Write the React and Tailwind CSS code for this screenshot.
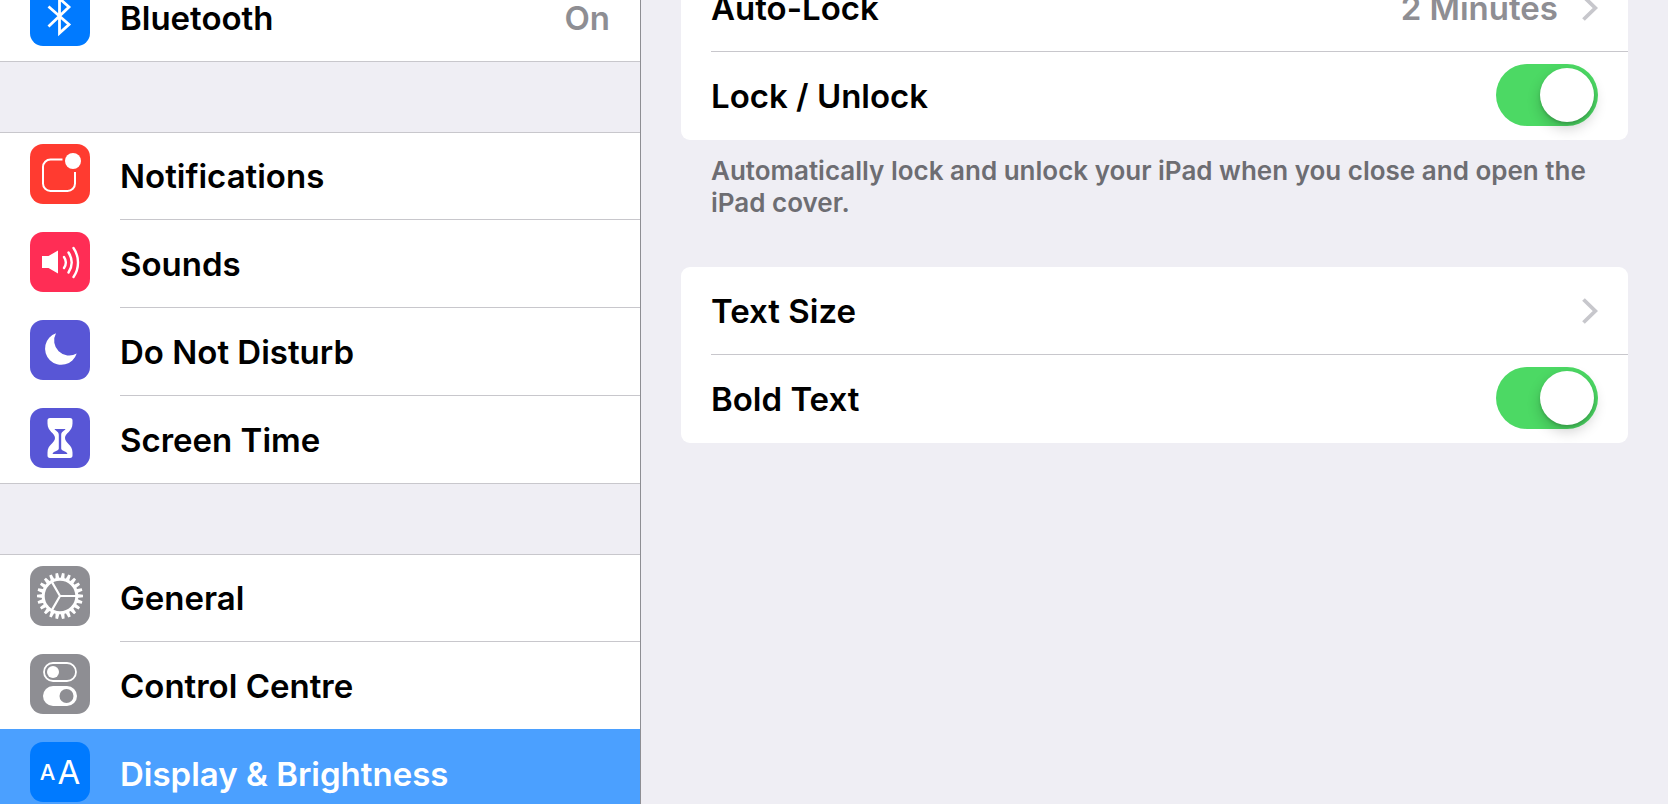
import React, { useState } from "react";

const BluetoothIcon = () => (
    <svg viewBox="0 0 60 60" className="size-[60px]" fill="none" stroke="#fff" strokeWidth="2.8">
        <path d="M18.5 20.5 39 38.5 29.5 47V12.5l9.5 8.5L18.5 40.5" />
    </svg>
);

const NotificationsIcon = () => (
    <svg viewBox="0 0 60 60" className="size-[60px]" fill="none">
        <path
            d="M32.5 15.5H20.5a7.5 7.5 0 0 0-7.5 7.5V39.5a7.5 7.5 0 0 0 7.5 7.5H37.5a7.5 7.5 0 0 0 7.5-7.5V28"
            stroke="#fff"
            strokeWidth="2"
        />
        <circle cx="43" cy="17" r="8" fill="#fff" />
    </svg>
);

const SoundsIcon = () => (
    <svg viewBox="0 0 60 60" className="size-[60px]" fill="none" stroke="#fff" strokeWidth="2.4" strokeLinecap="round">
        <path d="M12 24h6.5L28 18.5v23L18.5 36H12z" fill="#fff" stroke="none" />
        <path d="M34 25c2.3 3.4 2.3 7.6 0 11M38.500 20.5c4 6.2 4 13.8 0 20M43.5 16c6 8.5 6 20.5 0 29" />
    </svg>
);

const MoonIcon = () => (
    <svg viewBox="0 0 60 60" className="size-[60px]">
        <path d="M26 13.3a16.2 16.2 0 1 0 20.7 20.2A15 15 0 0 1 26 13.3z" fill="#fff" />
    </svg>
);

const HourglassIcon = () => (
    <svg viewBox="0 0 60 60" className="size-[60px]">
        <path
            d="M20 10h20c1.8 0 2.5 1 2.5 2.5v3c0 8-7.5 9.5-7.5 14.5s7.5 6.5 7.5 14.5v3c0 1.5-.7 2.5-2.5 2.5H20c-1.8 0-2.5-1-2.5-2.5v-3c0-8 7.5-9.5 7.5-14.5s-7.5-6.500-7.5-14.5v-3C17.5 11 18.2 10 20 10z"
            fill="#fff"
        />
        <path
            d="M24.5 21h11c-1 2-4.3 2.5-4.3 6v13.5c0 2.5 5 2 6.3 5.5h-15c1.3-3.5 6.3-3 6.3-5.5V27c0-3.5-3.3-4-4.3-6z"
            fill="#5856d6"
        />
    </svg>
);

const teeth = Array.from({ length: 22 }, (_, i) => (i * 360) / 22);

const GearIcon = () => (
    <svg viewBox="0 0 60 60" className="size-[60px]" fill="none" stroke="#fff">
        <circle cx="30" cy="30" r="16.8" strokeWidth="3" />
        {teeth.map((angle) => (
            <path key={angle} d="M47 28l6 .7v2.6l-6 .7z" fill="#fff" stroke="none" transform={`rotate(${angle} 30 30)`} />
        ))}
        <path d="M30 30h16M30 30l-8-13.9M30 30l-8 13.9" strokeWidth="2.2" />
    </svg>
);

const ControlCentreIcon = () => (
    <svg viewBox="0 0 60 60" className="size-[60px]">
        <rect x="14" y="9" width="32" height="18" rx="9" fill="none" stroke="#fff" strokeWidth="1.8" />
        <circle cx="23" cy="18" r="6" fill="#fff" />
        <rect x="13" y="32" width="34" height="20" rx="10" fill="#fff" />
        <circle cx="36.5" cy="42" r="7" fill="#8e8e93" />
    </svg>
);

const DisplayIcon = () => (
    <span className="flex h-[60px] items-center justify-center gap-0.5 font-normal text-white" aria-hidden="true">
        <span className="text-[22px] font-medium">A</span>
        <span className="text-[33px]">A</span>
    </span>
);

const groups = [
    [{ name: "Bluetooth", Icon: BluetoothIcon, color: "bg-[#007aff]", value: "On" }],
    [
        { name: "Notifications", Icon: NotificationsIcon, color: "bg-[#ff3b30]" },
        { name: "Sounds", Icon: SoundsIcon, color: "bg-[#ff2d55]" },
        { name: "Do Not Disturb", Icon: MoonIcon, color: "bg-[#5856d6]" },
        { name: "Screen Time", Icon: HourglassIcon, color: "bg-[#5856d6]" },
    ],
    [
        { name: "General", Icon: GearIcon, color: "bg-[#8e8e93]" },
        { name: "Control Centre", Icon: ControlCentreIcon, color: "bg-[#8e8e93]" },
        { name: "Display & Brightness", Icon: DisplayIcon, color: "bg-[#007aff]" },
    ],
];

const SidebarGroup = ({ items, selected, onSelect }) => (
    <ul className="bg-white border-t border-[#c8c7cc]">
        {items.map(({ name, Icon, color, value }, i) => {
            const active = name === selected;
            const last = i === items.length - 1;
            const beforeActive = !last && items[i + 1].name === selected;
            return (
                <li key={name} className={i === 0 ? "-mt-px" : ""}>
                    <button
                        onClick={() => onSelect(name)}
                        className={`flex h-[88px] w-full gap-[30px] pl-[30px] text-left ${
                            active ? "bg-[#4ba0ff] text-white" : ""
                        } ${last || beforeActive ? "border-b" : ""} ${
                            beforeActive ? "border-[#4ba0ff]" : "border-[#c8c7cc]"
                        }`}
                    >
                        <span className={`mt-3 size-[60px] shrink-0 overflow-hidden rounded-[13px] ${color}`}>
                            <Icon />
                        </span>
                        <span
                            className={`flex h-[88px] flex-1 items-center justify-between pr-[30px] ${
                                last || beforeActive ? "" : "border-b border-[#c8c7cc]"
                            }`}
                        >
                            {name}
                            {value && <span className="text-[#8e8e93]">{value}</span>}
                        </span>
                    </button>
                </li>
            );
        })}
    </ul>
);

const Chevron = () => (
    <svg viewBox="0 0 16 26" className="h-[26px] w-4" fill="none" stroke="#c7c7cc" strokeWidth="3.8">
        <path d="M1.5 1.5 13.3 13 1.5 24.5" />
    </svg>
);

const LinkRow = ({ name, value }) => (
    <button className="flex w-full pl-[30px] text-left">
        <span className="flex h-[88px] flex-1 items-center border-b border-[#c8c7cc] pr-[30px]">
            <span className="flex-1">{name}</span>
            {value && <span className="mr-6 text-[#8e8e93]">{value}</span>}
            <Chevron />
        </span>
    </button>
);

const SwitchRow = ({ name }) => {
    const [on, setOn] = useState(true);

    return (
        <label className="flex h-[88px] items-start justify-between px-[30px] pt-3">
            <span className="leading-[64px]">{name}</span>
            <input
                type="checkbox"
                role="switch"
                checked={on}
                onChange={(e) => setOn(e.target.checked)}
                className="h-[62px] w-[102px] appearance-none rounded-full bg-[#e5e5ea] p-1 before:block before:size-[54px] before:rounded-full before:bg-white before:shadow-[0_6px_14px_rgba(0,0,0,0.2),0_2px_3px_rgba(0,0,0,0.15)] checked:bg-[#4cd964] checked:before:ml-10"
            />
        </label>
    );
};

const App = () => {
    const [selected, setSelected] = useState("Display & Brightness");

    return (
        <div className="flex h-screen overflow-hidden bg-[#efeef4] font-['Inter','Liberation_Sans',sans-serif] text-[33px] font-semibold leading-10 text-black">
            <nav className="w-[641px] max-w-[40%] shrink-0 border-r border-[#8e8e93]">
                <div className="-mt-[26px] flex flex-col gap-[70px]">
                    {groups.map((items) => (
                        <SidebarGroup key={items[0].name} items={items} selected={selected} onSelect={setSelected} />
                    ))}
                </div>
            </nav>

            <main className="min-w-0 flex-1 px-10">
                <section className="-mt-9">
                    <div className="rounded-[9px] bg-white">
                        <LinkRow name="Auto-Lock" value="2 Minutes" />
                        <SwitchRow name="Lock / Unlock" />
                    </div>
                    <p className="px-[30px] pt-[15px] text-[26px] leading-8 text-[#6d6d72]">
                        Automatically lock and unlock your iPad when you close and open the iPad cover.
                    </p>
                </section>
                <section className="mt-12 rounded-[9px] bg-white">
                    <LinkRow name="Text Size" />
                    <SwitchRow name="Bold Text" />
                </section>
            </main>
        </div>
    );
};

export default App;
